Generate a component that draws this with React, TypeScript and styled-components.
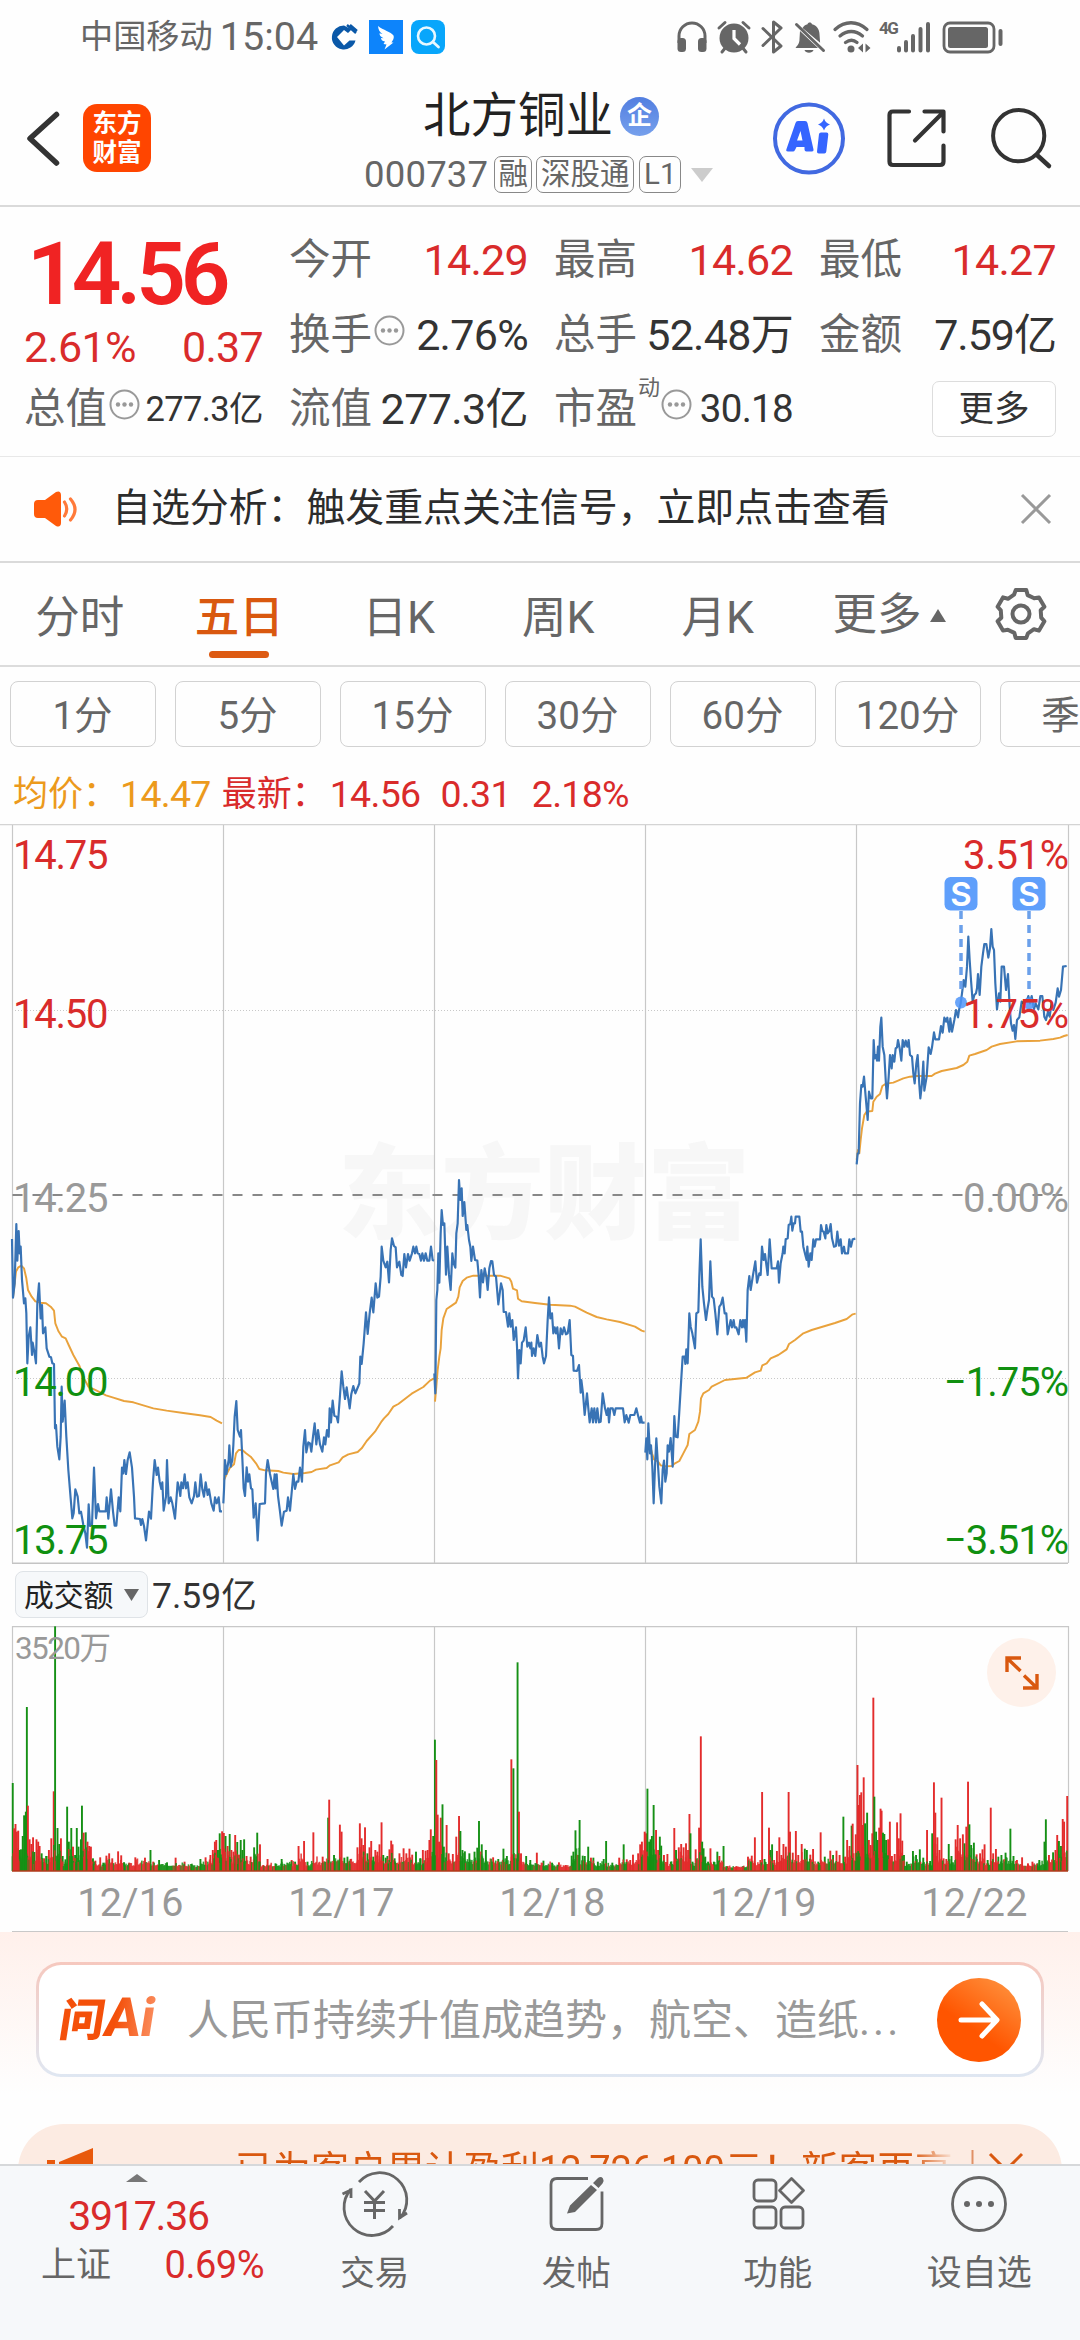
import React from 'react';
import styled, { createGlobalStyle } from 'styled-components';

const GlobalStyle = createGlobalStyle`
  * { box-sizing: border-box; }
  body {
    margin: 0;
    background: #fefefe;
    font-family: Roboto, "Noto Sans CJK SC", sans-serif;
    color: #333;
  }
  svg { display: block; flex: none; }
`;

const RED = '#d92b2b';
const GREEN = '#109010';
const GRAY = '#666';
const LIGHT = '#999';
const ORANGE = '#d9580f';

const Screen = styled.div`
  width: 1080px;
  height: 2340px;
  display: flex;
  flex-direction: column;
  overflow: hidden;
  white-space: nowrap;
`;

const Txt = styled.span<{ $s: number; $c?: string; $ls?: number; $w?: number; $ml?: number }>`
  font-size: ${(p) => p.$s}px;
  line-height: 1.2;
  color: ${(p) => p.$c || 'inherit'};
  letter-spacing: ${(p) => p.$ls || 0}px;
  font-weight: ${(p) => p.$w || 400};
  margin-left: ${(p) => p.$ml || 0}px;
`;

/* ---------- icons: each view box is [x, y, width, height] ---------- */
const Glyph = styled.svg<{ $ml?: number }>`
  margin-left: ${(p) => p.$ml || 0}px;
  overflow: visible;
`;
type IconProps = { box: [number, number, number, number]; ml?: number; children: React.ReactNode };
const Icon = ({ box, ml, children }: IconProps) => (
  <Glyph $ml={ml} width={box[2]} height={box[3]} viewBox={box.join(' ')} fill="none">
    {children}
  </Glyph>
);

/* ---------- status bar ---------- */
const StatusBar = styled.div`
  height: 72px;
  display: flex;
  align-items: center;
  justify-content: space-between;
  padding: 2px 77px 0 80px;
`;
const Cluster = styled.div`
  display: flex;
  align-items: center;
`;
const NetworkLabel = styled.span`
  align-self: flex-start;
  width: 17px;
  margin-left: 9px;
  font-size: 17px;
  font-weight: 700;
  line-height: 16px;
  letter-spacing: -1.5px;
  color: ${GRAY};
`;

const Status = () => (
  <StatusBar>
    <Cluster>
      <Txt $s={33.2} $c={GRAY}>中国移动</Txt>
      <Txt $s={39.5} $c={GRAY} $ml={7}>15:04</Txt>
      <Icon box={[331, 19, 26, 34]} ml={13}>
        <path d="M344 24.5a12 12 0 1 0 11.5 15h-6l-5.500 5-7-8.500 7-7 4 3 3.500-3.500z" fill="#0a58a8" />
        <path d="M347 24l9 8M350 24l7 6" stroke="#0a58a8" strokeWidth="2.400" />
        <path d="M344 30l6 6-6 6-6-6z" fill="#fff" />
        <path d="M347 34.500h10" stroke="#fff" strokeWidth="3" />
      </Icon>
      <Icon box={[369, 19, 34, 34]} ml={12}>
        <rect x="369" y="19" width="34" height="34" fill="#0d84fb" />
        <path d="M378 25c5 4 13 6 15.500 9.500c1 3-1 5-2 7h2l-9 7 2-5-3-.5 1.500-2.500c-3-.5-4-2-4-3.500l2.500.2c-3-1.500-4-3-4-5l3 .8c-3-2-4-4-4.500-8z" fill="#fff" />
      </Icon>
      <Icon box={[411, 19, 34, 34]} ml={8}>
        <rect x="411" y="19" width="34" height="34" rx="8" fill="#08a6fb" />
        <circle cx="426.500" cy="35" r="8.500" stroke="#e8f8ff" strokeWidth="2.600" />
        <path d="M433 41l5.500 5" stroke="#e8f8ff" strokeWidth="2.800" strokeLinecap="round" />
      </Icon>
    </Cluster>
    <Cluster>
      <Icon box={[678, 20, 30, 32]}>
        <path d="M680 42v-7a13 13 0 0 1 26 0v7" stroke={GRAY} strokeWidth="3" />
        <rect x="678.500" y="37" width="8.500" height="14" rx="3.500" fill={GRAY} />
        <rect x="699" y="37" width="8.500" height="14" rx="3.500" fill={GRAY} />
      </Icon>
      <Icon box={[719, 20, 32, 32]} ml={11}>
        <circle cx="735" cy="37" r="14.500" fill={GRAY} />
        <path d="M735 29v8.500l6 6" stroke="#fff" strokeWidth="3.200" />
        <path d="M720 27l6-5.500M750 27l-6-5.500M723 51l4-5M747 51l-4-5" stroke={GRAY} strokeWidth="3" strokeLinecap="round" />
      </Icon>
      <Icon box={[763, 19, 21, 34]} ml={12}>
        <path d="M764 27.500l18 17.500-7.500 6V21l7.500 6-18 17.500" stroke={GRAY} strokeWidth="3" strokeLinejoin="round" strokeLinecap="round" />
      </Icon>
      <Icon box={[796, 20, 29, 32]} ml={12}>
        <path d="M801 30l18 17h-22.500c2-3 4-4 4-9zM803.500 27c1-2 3-3.500 5-3.800c.5-2.200 4-2.200 4.500 0c4.500 1 7.500 5 7.500 10l.6 8.500z" fill={GRAY} />
        <path d="M805.500 49h9c-1 3.500-8 3.500-9 0z" fill={GRAY} />
        <path d="M797.500 23.500l27 26" stroke={GRAY} strokeWidth="3" strokeLinecap="round" />
      </Icon>
      <Icon box={[835, 20, 36, 32]} ml={10}>
        <path d="M836 28.500c10-9 22-9 32 0M841 35c7-6 15.500-6 22.500 0M846.500 41.500c4-3 8-3 11.500 0" stroke={GRAY} strokeWidth="3.300" strokeLinecap="round" />
        <circle cx="852" cy="48" r="3.500" fill={GRAY} />
        <path d="M864 42.500v9l-5-4.500zM866.500 42.500v9l5-4.500z" fill={GRAY} />
      </Icon>
      <NetworkLabel>4G</NetworkLabel>
      <Icon box={[897, 20, 33, 32]} ml={1}>
        <path d="M899 47v2.500M906 41v8.500M913 35v14.500M920.500 28v21.500M928 23v26.500" stroke={GRAY} strokeWidth="4" strokeLinecap="round" />
      </Icon>
      <Icon box={[941, 20, 61, 32]} ml={12}>
        <rect x="943" y="22" width="50" height="29" rx="6" stroke={GRAY} strokeWidth="2.800" />
        <rect x="947" y="26" width="40" height="21" rx="2.500" fill={GRAY} />
        <path d="M999.500 30v13" stroke={GRAY} strokeWidth="4" strokeLinecap="round" />
      </Icon>
    </Cluster>
  </StatusBar>
);

/* ---------- title bar ---------- */
const HeaderBar = styled.header`
  height: 135px;
  display: grid;
  grid-template-columns: 364px 350px 1fr;
  border-bottom: 2px solid #dadada;
`;
const HeaderLeft = styled.div`
  display: flex;
  align-items: center;
  padding-left: 27px;
`;
const AppBadge = styled.div`
  margin-left: 25px;
  width: 68px;
  height: 68px;
  border-radius: 14px;
  background: #ff4500;
  color: #fff;
  font-weight: 700;
  font-size: 24.5px;
  line-height: 29px;
  display: flex;
  flex-direction: column;
  align-items: center;
  justify-content: center;
`;
const TitleBlock = styled.div`
  display: flex;
  flex-direction: column;
`;
const TitleRow = styled.div`
  height: 60px;
  margin-top: 15px;
  padding-left: 59px;
  display: flex;
  align-items: center;
`;
const CompanyBadge = styled.span`
  width: 39px;
  height: 39px;
  border-radius: 50%;
  margin-left: 7px;
  background: linear-gradient(#527ee0, #76a0ec);
  color: #fff;
  font-size: 25px;
  font-weight: 700;
  line-height: 37px;
  text-align: center;
`;
const CodeRow = styled.div`
  height: 44px;
  margin-top: 6px;
  display: flex;
  align-items: center;
`;
const Tag = styled.span<{ $w: number; $ml: number }>`
  width: ${(p) => p.$w}px;
  height: 37px;
  margin-left: ${(p) => p.$ml}px;
  border: 1.5px solid #888;
  border-radius: 7px;
  color: ${GRAY};
  font-size: 29.5px;
  line-height: 34px;
  display: flex;
  justify-content: center;
`;
const HeaderRight = styled.div`
  display: flex;
  align-items: center;
  padding-left: 58px;
`;

const Header = () => (
  <HeaderBar>
    <HeaderLeft>
      <Icon box={[26, 112, 31, 55]}>
        <path d="M55.500 115.500L29 139.500L55.500 164" stroke="#333" strokeWidth="5.500" strokeLinecap="round" strokeLinejoin="round" />
      </Icon>
      <AppBadge><span>东方</span><span>财富</span></AppBadge>
    </HeaderLeft>
    <TitleBlock>
      <TitleRow>
        <Txt $s={47.500} $c="#222">北方铜业</Txt>
        <CompanyBadge>企</CompanyBadge>
      </TitleRow>
      <CodeRow>
        <Txt $s={36.500} $c={GRAY} $ls={0.2}>000737</Txt>
        <Tag $w={38} $ml={6}>融</Tag>
        <Tag $w={98} $ml={4}>深股通</Tag>
        <Tag $w={42} $ml={5}>L1</Tag>
        <Icon box={[690, 166, 22, 14]} ml={10}>
          <path d="M690 166h22l-11 14z" fill="#ccc" />
        </Icon>
      </CodeRow>
    </TitleBlock>
    <HeaderRight>
      <Icon box={[772, 103, 74, 73]}>
        <circle cx="809" cy="139.500" r="34" stroke="#4169e1" strokeWidth="4" />
        <path d="M795.500 124q.5-2 2.500-2h7q2 0 2.500 2l6 26.500q.4 2-1.500 2h-5.500q-2 0-2-2v-2.500h-8l-1.500 3q-.8 1.500-2 1.500h-5q-2.500 0-1.500-2.500zM800.500 132l-3.500 9.500h5.500z" fill="#3565ff" fillRule="evenodd" />
        <path d="M819 135q.3-1.500 2-1.500h5.500q2 0 1.800 2l-2 17q-.2 2-2 2h-5.500q-2 0-1.800-2z" fill="#3565ff" />
        <path d="M824 119.500q1.500 4.500 6 6q-4.500 1.500-6 6q-1.500-4.500-6-6q4.500-1.500 6-6z" fill="#3565ff" />
      </Icon>
      <Icon box={[887, 110, 59, 59]} ml={41}>
        <path d="M909 112.500h-16q-3.500 0-3.500 3.500v46.500q0 3.500 3.500 3.500h47q3.500 0 3.500-3.500v-16M924.500 112.500h19v20M943 113.500l-28 28" stroke="#333" strokeWidth="4.200" strokeLinecap="round" strokeLinejoin="round" />
      </Icon>
      <Icon box={[991, 108, 60, 62]} ml={45}>
        <circle cx="1018.700" cy="136.700" r="25.600" stroke="#333" strokeWidth="4" />
        <path d="M1037 156l12 11" stroke="#333" strokeWidth="4.500" strokeLinecap="round" />
      </Icon>
    </HeaderRight>
  </HeaderBar>
);

/* ---------- quote ---------- */
const QuoteGrid = styled.section`
  height: 250px;
  padding: 15px 24px 0 24px;
  display: grid;
  grid-template-columns: 239px 239px 239px 237px;
  column-gap: 26px;
  grid-template-rows: 77px 73px 75px;
  align-items: center;
  border-bottom: 1.500px solid #e8e8e8;
`;
const Cell = styled.div<{ $dy?: number }>`
  display: flex;
  align-items: center;
  height: 56px;
  margin-top: ${(p) => p.$dy || 0}px;
`;
const Push = styled.span`
  flex: 1;
`;
const MoreButton = styled.button`
  margin-left: auto;
  width: 124px;
  height: 56px;
  padding: 0;
  border: 1.500px solid #ddd;
  border-radius: 7px;
  background: #fff;
  color: #333;
  font-family: inherit;
  font-size: 35.500px;
  line-height: 50px;
`;
const Sup = styled.span`
  align-self: flex-start;
  font-size: 22px;
  line-height: 24px;
  margin-left: 1px;
  margin-top: -5px;
  color: ${GRAY};
`;
const Info = ({ ml = 2 }: { ml?: number }) => (
  <Icon box={[0, 4, 31, 40]} ml={ml}>
    <circle cx="15.500" cy="19.500" r="14" stroke={LIGHT} strokeWidth="2" />
    <circle cx="9" cy="19.500" r="2.200" fill={LIGHT} />
    <circle cx="15.500" cy="19.500" r="2.200" fill={LIGHT} />
    <circle cx="22" cy="19.500" r="2.200" fill={LIGHT} />
  </Icon>
);
const Label = ({ children }: { children: string }) => <Txt $s={41.500} $c={GRAY}>{children}</Txt>;
const Value = ({ children, red, s = 43, ls = -0.7 }: { children: string; red?: boolean; s?: number; ls?: number }) => (
  <Txt $s={s} $c={red ? RED : '#333'} $ls={ls}>{children}</Txt>
);

const Quote = () => (
  <QuoteGrid>
    <Cell $dy={27}><Txt $s={87} $w={600} $c="#f02323" $ml={3} $ls={-5}>14.56</Txt></Cell>
    <Cell><Label>今开</Label><Push /><Value red>14.29</Value></Cell>
    <Cell><Label>最高</Label><Push /><Value red>14.62</Value></Cell>
    <Cell><Label>最低</Label><Push /><Value red>14.27</Value></Cell>

    <Cell $dy={25}><Value red>2.61%</Value><Push /><Value red>0.37</Value></Cell>
    <Cell><Label>换手</Label><Info /><Push /><Value>2.76%</Value></Cell>
    <Cell><Label>总手</Label><Push /><Value ls={-0.7}>52.48万</Value></Cell>
    <Cell><Label>金额</Label><Push /><Value ls={-1}>7.59亿</Value></Cell>

    <Cell><Label>总值</Label><Info /><Push /><Value s={34.500} ls={-0.6}>277.3亿</Value></Cell>
    <Cell><Label>流值</Label><Push /><Value ls={-0.6}>277.3亿</Value></Cell>
    <Cell><Label>市盈</Label><Sup>动</Sup><Info ml={1} /><Push /><Value s={38.500}>30.18</Value></Cell>
    <Cell><MoreButton>更多</MoreButton></Cell>
  </QuoteGrid>
);

/* ---------- notice ---------- */
const NoticeBar = styled.div`
  height: 106px;
  display: flex;
  align-items: center;
  padding: 0 29px 0 34px;
  border-bottom: 2px solid #dadada;
`;
const Notice = () => (
  <NoticeBar>
    <Icon box={[34, 490, 44, 36]}>
      <path d="M38 499h7l11-8c3-1.500 5 0 5 3v28c0 3-2 4.500-5 3l-11-8h-7q-4 0-4-4v-10q0-4 4-4z" fill="#ff5a0a" />
      <path d="M64.500 501q4.500 7 0 14M70.500 498q9 10.500 0 21" stroke="#ff7a3a" strokeWidth="3.200" strokeLinecap="round" />
    </Icon>
    <Txt $s={38.900} $c="#2c2c2c" $ml={34}>自选分析：触发重点关注信号，立即点击查看</Txt>
    <Push />
    <Icon box={[1020, 494, 30, 30]}>
      <path d="M1021 495l28 28M1049 495l-28 28" stroke={LIGHT} strokeWidth="3" />
    </Icon>
  </NoticeBar>
);

/* ---------- tabs ---------- */
const TabBar = styled.nav`
  height: 104px;
  display: flex;
  border-bottom: 2px solid #dcdcdc;
`;
const Tab = styled.div<{ $on?: boolean }>`
  width: 159.5px;
  display: flex;
  flex-direction: column;
  align-items: center;
  padding-top: 22px;
  font-size: 44.500px;
  line-height: 66px;
  font-weight: ${(p) => (p.$on ? 500 : 400)};
  color: ${(p) => (p.$on ? ORANGE : GRAY)};
  &::after {
    content: '';
    width: 60px;
    height: 7px;
    border-radius: 4px;
    background: ${(p) => (p.$on ? '#dd5a12' : 'transparent')};
  }
`;
const MoreTab = styled.div`
  display: flex;
  align-items: center;
  padding-left: 35px;
  height: 106px;
`;
const toothed = () => {
  const pts: string[] = [];
  for (let i = 0; i < 6; i++) {
    const a = (i * 60 - 90) * Math.PI / 180;
    const at = (r: number, d: number) => `${(25 + r * Math.cos(a + d)).toFixed(1)},${(25 + r * Math.sin(a + d)).toFixed(1)}`;
    pts.push(at(24.5, -0.22), at(24.5, 0.22), at(20, 0.34), at(20.5, 0.7));
  }
  return pts.join(' ');
};
const Tabs = () => (
  <TabBar>
    {['分时', '五日', '日K', '周K', '月K'].map((t) => <Tab key={t} $on={t === '五日'}>{t}</Tab>)}
    <MoreTab>
      <Txt $s={44.500} $c={GRAY}>更多</Txt>
      <Icon box={[0, 0, 16, 14]} ml={8}><path d="M0 13h16l-8-13z" fill={GRAY} /></Icon>
      <Icon box={[0, 2, 50, 50]} ml={50}>
        <polygon points={toothed()} stroke={GRAY} strokeWidth="4" strokeLinejoin="round" />
        <circle cx="25" cy="25" r="8.500" stroke={GRAY} strokeWidth="4" />
      </Icon>
    </MoreTab>
  </TabBar>
);

/* ---------- period chips ---------- */
const ChipRow = styled.div`
  height: 97px;
  padding: 14px 0 0 9.5px;
  display: flex;
  gap: 19px;
  overflow: hidden;
`;
const Chip = styled.div`
  flex: 0 0 146px;
  height: 66px;
  border: 1.500px solid #d2d2d2;
  border-radius: 8px;
  text-align: center;
  color: ${GRAY};
  font-size: 38.500px;
  line-height: 67px;
`;

/* ---------- legend ---------- */
const LegendRow = styled.div`
  height: 61px;
  padding: 2px 0 0 13px;
  display: flex;
  align-items: center;
`;
const Legend = () => (
  <LegendRow>
    <Txt $s={35} $c="#ec9a1c">均价：</Txt>
    <Txt $s={37.500} $c="#ec9a1c" $ml={2} $ls={-0.7}>14.47</Txt>
    <Txt $s={35} $c={RED} $ml={11}>最新：</Txt>
    <Txt $s={37.500} $c={RED} $ml={3} $ls={-0.7}>14.56</Txt>
    <Txt $s={37.500} $c={RED} $ml={20} $ls={-0.7}>0.31</Txt>
    <Txt $s={37.500} $c={RED} $ml={21} $ls={-0.7}>2.18%</Txt>
  </LegendRow>
);

/* ---------- price chart ---------- */
const DAY_X = [12.5, 223.5, 434.5, 645.5, 856.5, 1068.5];

type Series = { ox: number; oy: number; price: string; avg: string };
/* Points are in thirds of a pixel from the origin (ox, oy). */
const SERIES: Series[] = [
  {
    ox: 0, oy: 1170,
    price: '36,207 39,383 44,340 49,162 52,272 56,183 59,250 62,230 66,330 72,400 76,385 79,430 82,580 86,500 91,472 96,555 98,518 103,545 108,580 112,400 117,340 122,445 126,405 129,490 136,472 140,535 148,560 153,562 157,580 162,582 165,775 168,765 172,830 178,868 182,800 185,650 188,755 194,692 199,800 205,900 212,985 217,1045 221,1030 226,958 233,980 238,1030 243,1025 250,1065 256,1090 261,1133 266,1003 270,1068 276,1065 282,893 288,1045 294,1002 298,1024 317,1024 320,982 325,1046 333,958 339,1024 344,1067 349,1067 356,982 361,1024 366,893 370,910 373,870 378,912 383,870 389,847 396,893 402,980 405,1045 420,1047 423,1065 427,1047 432,1068 438,1111 447,1025 453,1046 459,935 464,870 470,915 474,893 479,935 484,957 487,937 491,1022 498,980 501,870 506,1000 512,982 517,1000 525,1046 533,937 538,958 541,978 544,937 549,955 554,913 558,955 563,937 568,982 575,1000 582,978 586,937 591,980 597,978 602,913 607,958 612,980 617,937 623,975 627,958 634,1000 641,1022 645,982 650,1000 656,982 660,1024 666,1024',
    avg: '39,383 44,340 48,305 55,292 64,287 72,295 79,325 84,360 95,380 106,394 120,398 138,400 152,410 162,422 166,460 175,483 186,500 197,505 206,525 220,555 238,587 252,625 265,650 290,662 318,676 340,683 372,693 400,697 430,706 460,715 500,722 550,729 600,736 632,741 650,752 666,760',
  },
  {
    ox: 0, oy: 1170,
    price: '670,1000 672,960 675,870 679,912 686,870 688,826 692,890 697,870 700,826 704,740 709,693 713,780 720,800 723,780 727,865 731,955 735,978 740,892 744,935 748,913 753,955 757,958 761,1043 767,1000 773,1111 779,1002 795,1000 798,910 803,870 810,912 815,935 820,957 824,913 827,955 830,913 834,978 840,1025 845,1067 852,1025 860,1022 864,982 870,1022 876,957 880,913 885,957 890,935 895,935 900,893 906,935 910,830 915,780 919,847 925,817 930,820 934,845 939,800 944,760 949,823 954,780 960,823 967,845 972,802 976,823 981,780 986,800 989,715 993,757 998,692 1003,737 1010,740 1014,757 1019,690 1025,604 1030,650 1035,687 1040,652 1049,715 1054,672 1060,648 1066,670 1075,648 1078,640 1081,560 1085,582 1091,520 1098,427 1103,492 1109,430 1115,383 1120,427 1127,340 1132,383 1137,380 1142,320 1145,230 1150,272 1157,292 1162,275 1167,337 1172,240 1176,205 1182,228 1187,232 1191,292 1198,275 1204,315 1208,318 1213,252 1218,292 1224,252 1229,272 1236,250 1240,230 1245,250 1249,230 1253,250 1258,252 1263,272 1267,250 1272,272 1277,250 1282,272 1288,272 1293,230 1298,270 1302,272',
    avg: '672,930 680,912 690,893 702,883 708,850 716,840 727,840 738,850 752,860 768,880 778,897 795,901 835,903 850,908 880,912 915,909 935,906 948,899 980,894 990,886 1016,877 1028,862 1045,853 1073,846 1085,835 1100,813 1125,785 1145,754 1152,745 1165,732 1180,710 1195,702 1235,671 1270,651 1290,632 1302,625',
  },
  {
    ox: 420, oy: 1100,
    price: '43,820 46,880 49,600 52,570 55,460 58,548 62,400 65,330 69,375 73,370 78,524 82,440 87,524 92,570 97,460 101,490 106,503 109,400 113,370 117,240 121,300 125,265 128,348 133,306 139,390 142,375 147,420 151,440 154,483 159,440 165,480 172,482 176,525 180,592 184,510 189,547 194,505 199,530 203,570 208,505 213,483 217,484 222,525 228,530 235,613 243,550 248,570 251,636 258,636 264,680 268,640 272,680 277,660 281,720 288,682 291,740 294,835 298,750 302,790 306,728 311,722 317,682 322,740 327,728 331,745 334,728 336,768 341,745 346,768 352,705 358,740 363,728 368,770 372,790 378,768 383,660 387,592 391,655 396,640 400,700 404,682 408,700 412,682 417,745 422,685 427,703 432,682 438,703 443,700 449,660 454,765 459,768 461,812 471,813 477,795 482,878 484,840 489,880 494,945 501,880 505,925 509,967 515,925 519,967 523,925 528,967 532,925 537,967 542,965 548,880 555,925 560,945 564,925 567,967 571,925 578,925 583,945 587,925 609,925 614,967 619,945 626,968 631,945 643,945 649,925 655,950 660,968 663,950 666,968 674,968',
    avg: '45,905 49,860 53,810 58,770 62,745 65,690 70,655 80,627 95,617 108,608 115,590 119,562 128,543 140,533 160,527 240,527 268,535 274,545 279,566 291,571 294,596 305,604 345,609 390,614 450,617 465,620 500,638 530,651 560,658 600,666 645,680 665,692 674,695',
  },
  {
    ox: 420, oy: 1100,
    price: '676,1058 679,1015 682,1078 685,970 690,1060 693,1036 697,1100 701,1210 705,1100 709,1015 713,1080 718,1160 724,1210 728,1110 732,1082 736,1145 740,1120 743,1036 747,1055 752,1014 758,1100 763,948 767,1010 773,1012 777,950 783,850 788,770 794,770 796,792 799,748 803,790 808,640 812,680 817,700 825,745 829,640 835,636 838,530 842,418 847,560 852,610 858,660 862,630 867,600 871,484 876,590 881,596 886,640 892,703 898,620 903,613 908,593 914,640 919,640 923,703 932,660 936,682 941,660 944,682 949,682 956,703 961,660 966,682 969,660 973,682 975,660 979,725 983,570 988,528 992,570 999,525 1006,484 1011,548 1018,520 1022,525 1026,440 1031,480 1035,462 1043,525 1049,418 1055,505 1070,505 1074,484 1077,548 1082,490 1088,460 1090,440 1094,460 1097,418 1103,415 1106,375 1111,372 1114,350 1117,392 1121,370 1125,370 1127,350 1138,350 1142,395 1146,395 1150,440 1156,465 1160,480 1162,440 1166,500 1171,460 1175,480 1180,418 1184,440 1188,418 1200,418 1203,375 1207,393 1211,395 1216,415 1219,375 1223,400 1228,393 1232,372 1236,415 1242,440 1248,438 1252,395 1257,437 1262,418 1266,460 1272,440 1275,460 1284,460 1288,418 1293,440 1298,418 1306,416',
    avg: '678,1040 690,1035 696,1060 702,1078 714,1085 722,1096 735,1099 755,1098 765,1090 778,1083 790,1060 803,1035 808,1002 825,990 835,965 840,935 843,895 850,880 867,870 875,860 915,840 980,833 1005,817 1022,812 1027,796 1040,790 1052,775 1075,765 1100,748 1107,732 1125,720 1150,700 1175,690 1245,669 1280,657 1298,643 1307,641',
  },
  {
    ox: 840, oy: 820,
    price: '50,1033 53,1000 56,1000 60,850 64,795 68,800 72,770 77,830 83,900 87,815 92,835 97,835 101,660 104,715 108,705 111,722 114,680 117,722 121,620 124,593 128,680 133,705 138,795 141,835 146,770 150,705 155,745 158,705 163,725 167,685 171,682 174,660 179,685 184,722 188,660 193,680 197,662 202,680 206,660 210,705 216,710 220,760 224,790 229,730 233,705 238,795 241,835 246,790 250,725 253,812 260,770 266,682 272,702 276,682 282,637 286,658 297,658 303,618 308,638 313,593 318,605 322,593 328,635 331,595 336,635 343,600 348,570 354,592 357,570 362,550 366,520 371,480 376,500 381,440 385,350 389,420 393,480 398,545 403,525 408,520 411,505 414,462 419,525 424,440 429,400 433,372 439,372 445,413 450,385 454,327 458,380 462,390 466,490 471,568 477,520 481,545 485,440 492,440 498,510 504,462 509,560 513,610 518,632 522,615 526,657 531,600 538,592 545,545 550,550 560,545 565,528 570,550 575,528 582,568 587,550 595,568 601,528 607,528 613,590 618,600 624,575 629,590 635,548 640,570 647,548 653,505 657,530 663,510 669,440 680,438',
    avg: '50,1020 54,990 58,1000 62,960 66,925 73,885 80,875 97,873 100,845 110,830 120,822 127,798 138,791 160,788 190,775 210,770 230,768 275,768 285,761 305,753 350,744 370,735 382,725 388,707 405,702 440,690 455,680 480,672 530,664 600,662 640,657 660,653 672,648 683,645',
  },
];

const AXIS: [string, string, number, string][] = [
  ['14.75', '3.51%', 868.5, RED],
  ['14.50', '1.75%', 1027.5, RED],
  ['14.25', '0.00%', 1211.500, LIGHT],
  ['14.00', '−1.75%', 1395.500, GREEN],
  ['13.75', '−3.51%', 1553.500, GREEN],
];

const PriceChart = () => (
  <svg width="1080" height="740" viewBox="0 824 1080 740" fontSize="40">
    <text x="338" y="1231" fontSize="103" fontWeight="900" fill="#f7f7f7" textLength="412">东方财富</text>
    <path d="M0 824.500H1080" stroke="#d4d4d4" strokeWidth="1.500" />
    <path d="M12 1563.200H1068" stroke="#c4c4c4" strokeWidth="1.500" />
    {DAY_X.map((x) => <path key={x} d={`M${x} 825V1563`} stroke="#c8c8c8" strokeWidth="1.200" />)}
    <path d="M15 1010.500H1068M15 1378.500H1068" stroke="#c8c8c8" strokeWidth="1" strokeDasharray="1 2" />
    <path d="M12.500 1195H1068" stroke="#888" strokeWidth="2" strokeDasharray="10 10" />
    {SERIES.map((s, i) => (
      <g key={i} transform={`translate(${s.ox} ${s.oy}) scale(0.33333)`} fill="none" strokeLinejoin="round">
        <polyline points={s.avg} stroke="#e9a23c" strokeWidth="5.800" />
        <polyline points={s.price} stroke="#3873b5" strokeWidth="6.500" />
      </g>
    ))}
    {[[961, 1002.5], [1029, 1003.5]].map(([x, y]) => (
      <g key={x}>
        <rect x={x - 16.500} y="877" width="33" height="33.500" rx="6" fill="#5f9ffb" />
        <text x={x} y="906" fontSize="33" fontWeight="600" fontFamily="Inter, sans-serif" fill="#fff" textAnchor="middle">S</text>
        <path d={`M${x} 911V990`} stroke="#6ba0ea" strokeWidth="3.500" strokeDasharray="8 6" />
        <circle cx={x} cy={y} r="6" fill="#4d94f8" opacity=".85" />
      </g>
    ))}
    {AXIS.map(([l, r, y, c]) => (
      <g key={l} fill={c}>
        <text x="13" y={y} textLength="95.500">{l}</text>
        <text x={r.length > 5 ? 944 : 963} y={y} textLength={r.length > 5 ? 125 : 106}>{r}</text>
      </g>
    ))}
  </svg>
);

/* ---------- volume ---------- */
const VolHead = styled.div`
  height: 62px;
  padding: 7px 0 0 15px;
  display: flex;
  align-items: flex-start;
`;
const Select = styled.div`
  width: 133px;
  height: 47px;
  border: 1.500px solid #dfe3e7;
  border-radius: 8px;
  background: #f6f8fa;
  display: flex;
  align-items: center;
  padding: 1px 0 0 8px;
`;
const VolValue = styled.span`
  height: 47px;
  margin-left: 4px;
  font-size: 35.500px;
  line-height: 50px;
`;

/* x, top, direction; both halves share the same vertical scale with the base at 933. */
const LEFT_BARS = '37,669g 41,805r 45,792r 49,815r 53,812r 57,870g 61,868g 66,828g 70,766g 75,755g 78,441g 81,737r 86,838r 91,852r 96,832r 100,876g 106,838r 111,845r 115,858r 121,880g 128,895r 134,888g 142,870r 149,835r 156,694r 160,199g 167,804g 172,852g 177,835r 182,888g 190,898g 195,740g 200,845g 207,804g 212,860r 218,885g 223,804g 228,860g 235,838g 238,737g 243,818r 249,817g 254,845r 259,858r 264,860r 270,895g 277,902r 291,892r 300,908g 309,887r 317,880r 326,895r 343,874r 352,886r 360,907g 375,908r 393,892r 421,893r 437,870g 445,905r 462,900g 485,907g 510,893r 536,905r 555,912g 582,897g 597,892r 611,885r 618,870r 624,845r 628,840r 633,870g 638,820g 645,814r 650,819r 655,828g 661,858r 667,822g 672,870r 678,875r 683,825r 689,846g 694,884r 699,840g 704,870g 709,838g 716,888r 728,890r 738,862g 747,818g 755,853r 765,915r 777,897r 800,910g 818,897g 847,900r 857,905g 867,858r 883,843r 893,905g 910,817r 937,890r 953,773g 956,719r 970,885g 987,794r 992,815r 1000,893g 1009,890g 1018,897r 1038,862r 1045,790r 1050,835r 1055,855r 1060,802r 1067,880g 1073,862r 1078,843r 1084,890g 1090,870r 1096,875r 1102,853r 1108,787r 1113,885g 1120,893g 1125,888g 1131,868r 1136,842r 1140,853r 1146,895g 1160,880r 1172,865r 1180,880r 1189,866r 1197,884r 1208,875g 1220,895g 1228,870r 1236,872r 1242,870r 1247,840r 1251,808r 1258,828g 1263,539g 1267,600r 1271,764r 1275,845r 1280,773r 1285,733g 1289,860g 1297,795r 1303,880r 1315,882r 1325,830r 1333,768r 1337,813g 1343,870g 1350,874g 1363,880g 1378,875g 1386,863g 1391,783g 1399,853g 1411,870g 1432,892r 1447,897g 1462,866g 1472,888g 1485,598r 1491,625g 1503,307g 1507,755r 1513,880r 1528,888g 1540,900g 1559,878r';
const RIGHT_BARS = '10,902g 35,908g 55,907r 75,915r 92,887g 97,875g 103,811g 115,780g 124,887g 130,888g 140,860g 148,893r 155,893g 168,905g 185,897g 192,843g 210,908g 230,893r 243,853g 252,898r 262,900r 270,884r 285,880r 291,853r 296,845r 304,815r 308,820r 312,686g 317,845g 321,838g 325,828g 330,735g 337,810r 343,870r 348,830g 352,857g 360,885r 370,882r 380,905g 390,804r 395,870g 403,862r 410,852r 417,862r 424,850r 430,870r 434,762r 437,820g 443,905g 452,868r 462,803r 467,529r 471,845g 475,865g 480,890g 488,905g 495,865r 505,905g 515,875g 521,888r 533,858g 545,918r 570,920r 590,918g 604,890r 615,887r 624,832r 640,900r 645,696r 652,897g 665,803r 669,870g 674,853g 680,900r 688,873r 695,832r 701,885r 707,852r 714,860r 722,696r 726,815r 734,878r 743,813r 750,885r 760,852r 769,866g 775,870g 785,884r 793,867r 808,905g 815,817r 827,890g 843,872r 851,885g 861,872r 870,885r 881,770g 886,890r 892,840r 899,858r 905,797g 908,791r 917,823r 922,615r 926,735r 929,705r 933,697r 937,795r 940,652r 944,790g 950,758g 955,840r 960,855r 965,820r 968,413r 971,710g 976,815g 981,840g 985,803r 989,746r 992,752r 996,818g 1000,822g 1005,840g 1011,838r 1016,785r 1022,888r 1030,882r 1037,787r 1042,835r 1047,760r 1052,842r 1057,885g 1065,905g 1083,873g 1092,885g 1103,868g 1113,893g 1124,810r 1133,903g 1139,820g 1144,667r 1148,758r 1154,832r 1160,870r 1166,713r 1172,895r 1180,897r 1187,852g 1195,888g 1207,838r 1213,795r 1220,835r 1228,823r 1233,850g 1238,800r 1243,665r 1247,793g 1252,855g 1260,848g 1268,883r 1278,880r 1285,868r 1291,853r 1300,900g 1309,743r 1316,880r 1324,867r 1331,890g 1340,885g 1352,878g 1366,806g 1375,888g 1385,900r 1400,892r 1417,910r 1430,905r 1445,910g 1450,900g 1465,845g 1469,778g 1478,885r 1490,877g 1497,870r 1502,825r 1507,843g 1513,858g 1518,777r 1522,785r 1531,708r';

type Bar = { x: number; h: number; up: boolean };
const parseBars = (src: string, ox: number): Bar[] =>
  src.split(' ').map((t) => {
    const [x, rest] = t.split(',');
    return { x: ox + Number(x) / 2.904, h: (933 - parseInt(rest, 10)) / 3, up: t.endsWith('r') };
  });
const MAJOR = [...parseBars(LEFT_BARS, 0), ...parseBars(RIGHT_BARS, 540)];

/* Minor minute bars stay below the lower of their two neighbouring peaks. */
const buildMinor = (): Bar[] => {
  let seed = 7;
  const rnd = () => {
    seed = (seed * 16807) % 2147483647;
    return seed / 2147483647;
  };
  const out: Bar[] = [];
  let k = 0;
  for (let x = 12.5; x < 1067; x += 0.88) {
    while (k < MAJOR.length - 2 && MAJOR[k + 1].x < x) k++;
    const cap = Math.min(MAJOR[k].h, MAJOR[k + 1].h, 30);
    const up = rnd() < 0.65 ? MAJOR[k].up : rnd() < 0.55;
    out.push({ x, h: 2 + cap * (0.25 + 0.5 * rnd() * rnd() + 0.2 * rnd()), up });
  }
  return out;
};
const MINOR = buildMinor();

const VolumeWrap = styled.div`
  position: relative;
  height: 246px;
`;
const ExpandButton = styled.button`
  position: absolute;
  right: 24px;
  top: 12px;
  width: 69px;
  height: 69px;
  padding: 0;
  border: 0;
  border-radius: 50%;
  background: #fef1ea;
  display: flex;
  align-items: center;
  justify-content: center;
`;
const barColor = (up: boolean) => (up ? '#e32c2c' : '#159015');
const Volume = () => (
  <VolumeWrap>
    <svg width="1080" height="246" viewBox="0 1626 1080 246">
      <path d="M12 1626.500H1069" stroke="#c8c8c8" strokeWidth="1.500" />
      {DAY_X.map((x) => <path key={x} d={`M${x} 1626V1871`} stroke="#c8c8c8" strokeWidth="1.200" />)}
      {MAJOR.map((b, i) => <rect key={i} x={b.x - 0.95} y={1871 - b.h} width="1.900" height={b.h} fill={barColor(b.up)} />)}
      {MINOR.map((b, i) => <rect key={i} x={b.x - 0.8} y={1871 - b.h} width="1.600" height={b.h} fill={barColor(b.up)} opacity=".85" />)}
      <path d="M12 1871H1068" stroke="#b03a1a" strokeWidth="1.500" />
      <text x="15" y="1659" fontSize="31.500" fill={LIGHT} textLength="96">3520万</text>
    </svg>
    <ExpandButton>
      <Icon box={[0, 0, 34, 34]}>
        <path d="M2 16V2h14M2.500 2.500l13 12.500M32 18v14H18M31.500 31.500l-12.500-12" stroke={ORANGE} strokeWidth="3.400" />
      </Icon>
    </ExpandButton>
  </VolumeWrap>
);
const DateRow = styled.div`
  height: 60px;
  margin: 0 12px;
  padding: 2px 0 0 13px;
  border-bottom: 1.500px solid #c8c8c8;
  display: grid;
  grid-template-columns: repeat(5, 211px);
  justify-items: center;
  align-items: center;
`;

/* ---------- ask card ---------- */
const Promo = styled.section`
  height: 232px;
  overflow: hidden;
  background: linear-gradient(#fff0eb, #fefefe 70%);
  padding: 30px 18px 0;
  display: flex;
  flex-direction: column;
`;
const AskCard = styled.div`
  height: 115px;
  flex: none;
  margin: 0 18px;
  border: 3px solid transparent;
  border-radius: 25px;
  background: linear-gradient(#fff, #fff) padding-box, linear-gradient(#f6c8be, #dfe7f2) border-box;
  display: flex;
  align-items: center;
  padding: 0 20px 0 21px;
`;
const AskLogo = styled.div`
  width: 100px;
  margin-right: 27px;
  display: flex;
  align-items: baseline;
  transform: skewX(-9deg);
  font-weight: 900;
  font-size: 45px;
  line-height: 60px;
  letter-spacing: -0.5px;
  background: linear-gradient(90deg, #f4500a 0 55%, #fb9468);
  -webkit-background-clip: text;
  color: transparent;
`;
const LogoLatin = styled.span`
  font-size: 54px;
  font-weight: 800;
`;
const AskText = styled.div`
  padding-top: 3px;
  font-size: 42px;
  line-height: 56px;
  color: ${LIGHT};
`;
const Dots = styled.span`
  letter-spacing: 3px;
`;
const GoButton = styled.button`
  margin-left: auto;
  width: 84px;
  height: 84px;
  padding: 0;
  border: 0;
  border-radius: 50%;
  background: linear-gradient(215deg, #ff9440 5%, #ff5500 60%);
  display: flex;
  align-items: center;
  justify-content: center;
`;
const Banner = styled.div`
  flex: none;
  height: 92px;
  margin-top: 47px;
  border-radius: 46px;
  background: #fcebe2;
  display: flex;
  align-items: center;
  padding-left: 29px;
`;
const BannerText = styled.div`
  width: 720px;
  margin-left: 142px;
  overflow: hidden;
  font-size: 38px;
  line-height: 56px;
  color: ${ORANGE};
  -webkit-mask-image: linear-gradient(90deg, #000 94%, transparent);
`;
const Ask = () => (
  <Promo>
    <AskCard>
      <AskLogo>问<LogoLatin>Ai</LogoLatin></AskLogo>
      <AskText>人民币持续升值成趋势，航空、造纸<Dots>...</Dots></AskText>
      <GoButton>
        <Icon box={[0, 0, 42, 38]}>
          <path d="M3 19h35M24 3l15 16-15 16" stroke="#fff" strokeWidth="5" strokeLinecap="round" strokeLinejoin="round" />
        </Icon>
      </GoButton>
    </AskCard>
    <Banner>
      <Icon box={[47, 2148, 46, 44]}>
        <path d="M93 2148v44l-34-14v-16zM47 2160h8v14h-8z" fill="#e8590c" />
      </Icon>
      <BannerText>已为客户累计盈利12,726,100元！新客再享</BannerText>
      <Icon box={[973, 2150, 3, 40]} ml={16}><path d="M974.500 2150v40" stroke="#e09066" strokeWidth="2" /></Icon>
      <Icon box={[992, 2154, 32, 32]} ml={16}>
        <path d="M992 2154l32 32M1024 2154l-32 32" stroke={ORANGE} strokeWidth="3" />
      </Icon>
    </Banner>
  </Promo>
);

/* ---------- bottom bar ---------- */
const BottomBar = styled.footer`
  height: 176px;
  border-top: 2px solid #d6d8da;
  background: #f6f8fa;
  display: grid;
  grid-template-columns: 274px repeat(4, 201.500px);
`;
const IndexCell = styled.div`
  display: flex;
  flex-direction: column;
  align-items: center;
  padding-top: 8px;
`;
const IndexRow = styled.div`
  align-self: stretch;
  display: flex;
  align-items: center;
  justify-content: space-between;
  padding: 0 10px 0 41px;
  height: 50px;
`;
const IndexValue = styled.div`
  height: 50px;
  margin-top: 9px;
  padding-left: 3px;
  display: flex;
  align-items: center;
`;
const NavItem = styled.div`
  display: flex;
  flex-direction: column;
  align-items: center;
  padding-top: 10px;
  gap: 20px;
`;
const Bottom = () => (
  <BottomBar>
    <IndexCell>
      <Icon box={[0, 0, 22, 8]}><path d="M0 8h22L11 0z" fill="#777" /></Icon>
      <IndexValue><Txt $s={41} $c={RED} $ls={-1.200}>3917.36</Txt></IndexValue>
      <IndexRow>
        <Txt $s={35} $c={GRAY}>上证</Txt>
        <Txt $s={38} $c={RED} $ls={-0.5}>0.69%</Txt>
      </IndexRow>
    </IndexCell>
    <NavItem>
      <Icon box={[343, 2176, 66, 57]}>
        <path d="M360 2182a27 27 0 0 1 41 36M394 2226a27 27 0 0 1-42-37M343.500 2194l8.500-4v8M408 2213l-7.500 5v-9" stroke={GRAY} strokeWidth="2.800" />
        <path d="M366 2191l9.500 10 9.500-10M375.500 2201v18M365 2202.500h21M365 2210.500h21" stroke={GRAY} strokeWidth="3" />
      </Icon>
      <Txt $s={34.500} $c={GRAY}>交易</Txt>
    </NavItem>
    <NavItem>
      <Icon box={[549, 2176, 56, 57]}>
        <path d="M589 2178.500h-31q-6 0-6 6v39q0 6 6 6h39q6 0 6-6v-32" stroke={GRAY} strokeWidth="2.800" />
        <path d="M592 2185l6 5-22 22-8 1.500 3-8zM594 2183l5-5q3-2 5 .5q1.500 2.500-.5 5l-4 4.500z" fill={GRAY} />
      </Icon>
      <Txt $s={34.500} $c={GRAY}>发帖</Txt>
    </NavItem>
    <NavItem>
      <Icon box={[751, 2176, 54, 57]}>
        <g stroke={GRAY} strokeWidth="2.800" strokeLinejoin="round">
          <rect x="754" y="2180" width="22" height="21" rx="4" />
          <rect x="754" y="2207" width="22" height="21" rx="4" />
          <rect x="781" y="2207" width="22" height="21" rx="4" />
          <path d="M791.500 2178.500l12 12-12 12-12-12z" />
        </g>
      </Icon>
      <Txt $s={34.500} $c={GRAY}>功能</Txt>
    </NavItem>
    <NavItem>
      <Icon box={[951, 2176, 56, 57]}>
        <circle cx="979" cy="2204" r="26.500" stroke={GRAY} strokeWidth="2.800" />
        <circle cx="967" cy="2204" r="3" fill={GRAY} />
        <circle cx="979" cy="2204" r="3" fill={GRAY} />
        <circle cx="991" cy="2204" r="3" fill={GRAY} />
      </Icon>
      <Txt $s={35} $c={GRAY}>设自选</Txt>
    </NavItem>
  </BottomBar>
);

export default function App() {
  return (
    <>
      <GlobalStyle />
      <Screen>
        <Status />
        <Header />
        <Quote />
        <Notice />
        <Tabs />
        <ChipRow>
          {['1分', '5分', '15分', '30分', '60分', '120分', '季K'].map((c) => <Chip key={c}>{c}</Chip>)}
        </ChipRow>
        <Legend />
        <PriceChart />
        <VolHead>
          <Select>
            <Txt $s={29.800} $c="#222">成交额</Txt>
            <Icon box={[0, 0, 15, 12]} ml={11}><path d="M0 0h15l-7.500 12z" fill={GRAY} /></Icon>
          </Select>
          <VolValue>7.59亿</VolValue>
        </VolHead>
        <Volume />
        <DateRow>
          {['12/16', '12/17', '12/18', '12/19', '12/22'].map((d) => <Txt key={d} $s={39.500} $c={LIGHT} $ls={0.3}>{d}</Txt>)}
        </DateRow>
        <Ask />
        <Bottom />
      </Screen>
    </>
  );
}
